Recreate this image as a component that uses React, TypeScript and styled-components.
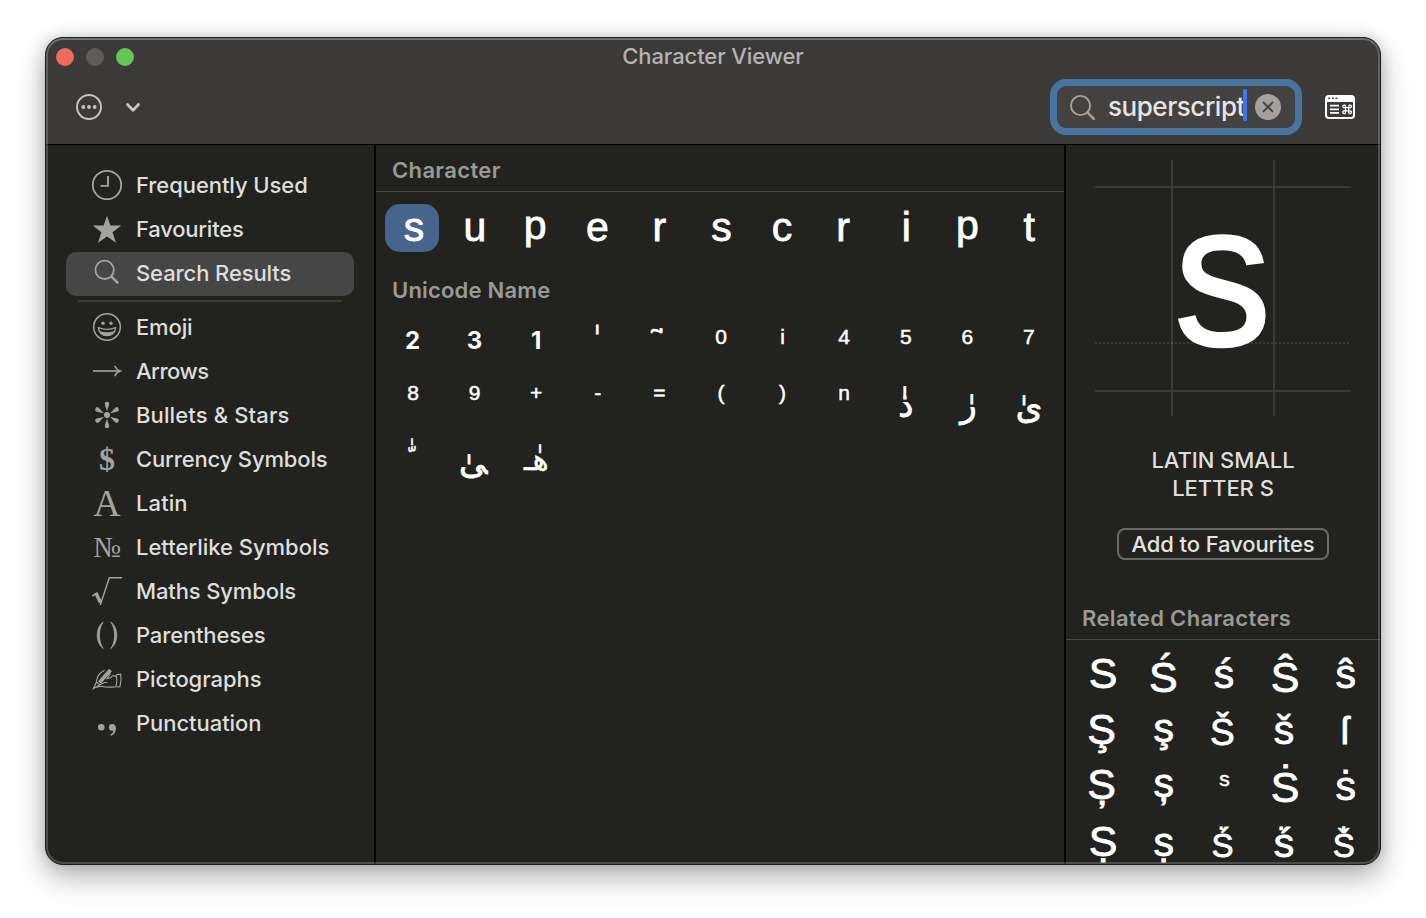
import React from "react";
import styled, { createGlobalStyle } from "styled-components";

const UI = `Inter, "Liberation Sans", sans-serif`;
const GLYPH = `"Liberation Sans", "DejaVu Sans", sans-serif`;

const GlobalStyle = createGlobalStyle`
  html, body { margin: 0; background: #fff; }
  body { font-family: ${UI}; overflow: hidden; }
  *, *::before, *::after { box-sizing: border-box; }
`;

const Desktop = styled.div`
  width: 1426px;
  height: 918px;
  padding: 37px 45px 53px;
  background: #fff;
`;

const Window = styled.div`
  width: 1336px;
  height: 828px;
  border: 1px solid #1b1c1a;
  border-radius: 18px;
  overflow: hidden;
  background: #22231e;
  box-shadow: 0 12px 30px rgba(0, 0, 0, 0.3), 0 0 14px rgba(0, 0, 0, 0.16);
  position: relative;
  display: flex;
  flex-direction: column;

  /* light rim drawn over the content along the window edge */
  &::after {
    content: "";
    position: absolute;
    inset: 0;
    border: 2px solid rgba(255, 255, 255, 0.2);
    border-top-color: rgba(255, 255, 255, 0.28);
    border-radius: 17px;
    pointer-events: none;
  }
`;

const Header = styled.header`
  height: 107px;
  flex: none;
  background: #3b3a38;
  border-bottom: 1px solid #000;
`;

const TitleBar = styled.div`
  height: 38px;
  display: grid;
  grid-template-columns: 200px 1fr 200px;
  align-items: center;
`;

const Lights = styled.div`
  display: flex;
  gap: 12px;
  padding-left: 10px;
`;

const Light = styled.span<{ $color: string }>`
  width: 18px;
  height: 18px;
  border-radius: 50%;
  background: ${(p) => p.$color};
`;

const Title = styled.h1`
  margin: 0;
  padding-bottom: 2px;
  text-align: center;
  font-size: 22px;
  font-weight: 450;
  letter-spacing: -0.1px;
  color: #b5b4b3;
`;

const Toolbar = styled.div`
  height: 62px;
  display: flex;
  align-items: center;
  padding: 0 24px 0 29px;
`;

const MenuButton = styled.button`
  display: flex;
  align-items: center;
  gap: 22px;
  padding: 0;
  border: 0;
  background: none;
  margin-right: auto;
`;

const SearchField = styled.div`
  width: 252px;
  height: 56px;
  margin-right: 22px;
  border: 7px solid #48759f;
  border-radius: 16px;
  background: #444240;
  display: flex;
  align-items: center;
  padding-left: 12px;
`;

const Query = styled.span`
  margin-left: 12px;
  width: 135px;
  font-size: 26px;
  line-height: 32px;
  font-weight: 450;
  letter-spacing: -0.45px;
  color: #e6e5e4;
  white-space: nowrap;
`;

const Caret = styled.span`
  width: 4px;
  height: 32px;
  margin: -4px 8px 0 0;
  border-radius: 1px;
  background: #3478f6;
`;

const Body = styled.div`
  flex: 1;
  min-height: 0;
  display: grid;
  grid-template-columns: 330px 690px 1fr;
`;

const Sidebar = styled.nav`
  border-right: 2px solid #000;
  padding: 19px 20px 0;
`;

const Item = styled.div<{ $active?: boolean }>`
  height: 44px;
  border-radius: 10px;
  padding: 0 0 2px 24px;
  display: flex;
  align-items: center;
  gap: 12px;
  color: #dededd;
  background: ${(p) => (p.$active ? "#464646" : "transparent")};
`;

const ItemIcon = styled.span`
  width: 34px;
  height: 34px;
  display: block;
  svg { display: block; overflow: visible; }
`;

const ItemLabel = styled.span<{ $track: number }>`
  font-size: 22px;
  line-height: 42px;
  font-weight: 450;
  letter-spacing: ${(p) => p.$track}px;
  white-space: nowrap;
`;

const Divider = styled.hr`
  height: 2px;
  margin: 4px 12px;
  border: 0;
  background: #3a3b37;
`;

const Main = styled.main`
  border-right: 2px solid #000;
`;

const Heading = styled.h2<{ $height: number; $rule?: boolean; $track?: number }>`
  margin: 0;
  height: ${(p) => p.$height}px;
  padding: 0 16px;
  display: flex;
  align-items: center;
  font-size: 22px;
  font-weight: 600;
  letter-spacing: ${(p) => p.$track ?? 0}px;
  color: #9a9a97;
  ${(p) => (p.$rule ? "padding-top: 4px; border-bottom: 1px solid #484945;" : "")}
`;

const Grid = styled.div<{ $cols: number; $pitch: number; $pad: string }>`
  display: grid;
  grid-template-columns: repeat(${(p) => p.$cols}, ${(p) => p.$pitch}px);
  grid-auto-rows: 56px;
  padding: ${(p) => p.$pad};
`;

const Cell = styled.div<{ $selected?: boolean }>`
  height: 48px;
  margin: 4px 4.6px 4px 3px;
  border-radius: 15px;
  display: flex;
  justify-content: center;
  background: ${(p) => (p.$selected ? "#48658d" : "transparent")};
`;

/* base: distance from the top of the 48px cell to the text baseline */
const Mark = styled.span<{ $size: number; $base: number; $dx: number; $weight: number; $font: string; $k: number; $turn: number }>`
  height: 48px;
  margin: 0 -20px;
  padding-left: ${(p) => Math.max(0, p.$dx * 2)}px;
  padding-right: ${(p) => Math.max(0, -p.$dx * 2)}px;
  font-family: ${(p) => p.$font};
  font-size: ${(p) => p.$size}px;
  font-weight: ${(p) => p.$weight};
  line-height: ${(p) => 2 * (p.$base - p.$k * p.$size)}px;
  -webkit-text-stroke: ${(p) => (p.$weight > 400 ? 0 : p.$size > 30 ? 0.8 : 0.5)}px #fff;
  color: #fff;
  white-space: nowrap;
  ${(p) => (p.$turn ? `transform: rotate(${p.$turn}deg);` : "")}
`;

type G = { c: string; s?: number; b?: number; dx?: number; w?: number; ui?: boolean; ar?: boolean; sel?: boolean; turn?: number };

const GlyphCell = ({ g }: { g: G }) => (
  <Cell $selected={g.sel}>
    <Mark
      $size={g.s ?? 41}
      $base={(g.b ?? 40) - 3.5}
      $dx={(g.dx ?? 0) + 1}
      $weight={g.w ?? 400}
      $font={g.ui ? UI : g.ar ? `"DejaVu Sans", sans-serif` : GLYPH}
      $k={g.ui ? 0.3637 : 0.3465}
      $turn={g.turn ?? 0}
    >
      {g.c}
    </Mark>
  </Cell>
);

const letterShift = [1, 0.3, -1, -0.5, 0, 0.5, -0.5, -1, 0.5, 0, 0.3];
const letters: G[] = "superscript".split("").map((c, i) => ({
  c,
  sel: i === 0,
  b: c === "p" ? 39 : 41,
  dx: letterShift[i],
}));

const sup = (c: string): G => ({ c, s: 21, b: 34, dx: 0 });
const unicodeNames: G[] = [
  { c: "2", s: 24, b: 39, w: 700, ui: true, dx: -0.5 },
  { c: "3", s: 24, b: 39, w: 700, ui: true },
  { c: "1", s: 24, b: 39, w: 700, ui: true },
  { c: "\u00a0\u0670", s: 32, b: 43, dx: -3.5, ar: true },
  { c: "\u00a0\u0711", s: 34, b: 50, dx: 2, turn: -90 },
  ..."0i4567".split("").map(sup),
  ..."89+-=()n".split("").map(sup),
  { c: "\u0630\u0670", s: 34, b: 51, ar: true },
  { c: "\u0631\u0670", s: 34, b: 50.5, dx: 1, ar: true },
  { c: "\u0649\u0670", s: 34, b: 51.5, ar: true },
  { c: "\u00a0\u0651\u0670", s: 23, b: 44, dx: -3, ar: true },
  { c: "\u200d\u0649\u0670", s: 34, b: 52, dx: -1.5, ar: true },
  { c: "\u0647\u0670\u0640", s: 30, b: 48, ar: true },
];

const related: G[] = [
  { c: "S", s: 43, b: 42, dx: 0.5 }, { c: "Ś", s: 43, b: 45.5 }, { c: "ś", b: 42 }, { c: "Ŝ", s: 43, b: 45.5, dx: 0.5 }, { c: "ŝ", b: 42, dx: 0.5 },
  { c: "Ş", s: 43, b: 41.5, dx: -1 }, { c: "ş", b: 40.5, dx: 0.5 }, { c: "Š", s: 37, b: 43.5, dx: -1.5 }, { c: "š", b: 42, dx: -0.5 }, { c: "ſ", s: 39, b: 42, dx: -0.5 },
  { c: "Ș", s: 43, b: 41, dx: -1 }, { c: "ș", b: 39, dx: 0.5 }, { c: "s", s: 21, b: 27.5, dx: 0.5 }, { c: "Ṡ", s: 43, b: 44, dx: 0.5 }, { c: "ṡ", b: 42.5, dx: 0.5 },
  { c: "Ṣ", s: 43, b: 42, dx: 0.5 }, { c: "ṣ", b: 42.5, dx: 0.5 }, { c: "Ṥ", s: 33, b: 43, dx: -1.5 }, { c: "ṥ", b: 43.5, dx: -0.5 }, { c: "Ṧ", s: 33, b: 43, dx: -1.5 },
];

const Details = styled.aside`
  display: flex;
  flex-direction: column;
  overflow: hidden;
`;

const Preview = styled.svg`
  display: block;
  flex: none;
  margin: 15px 0 0 29px;
  overflow: visible;
`;

const GlyphName = styled.p`
  margin: 30px 0 0;
  text-align: center;
  font-size: 22px;
  line-height: 28px;
  letter-spacing: -0.05px;
  font-weight: 450;
  color: #dededd;
`;

const FavouriteButton = styled.button`
  align-self: center;
  flex: none;
  width: 212px;
  height: 32px;
  margin: 26px 0 0;
  padding: 0;
  border: 2px solid #6a6b68;
  border-radius: 8px;
  background: transparent;
  font: 450 22px/28px ${UI};
  letter-spacing: -0.1px;
  color: #e4e4e3;
  white-space: nowrap;
`;

const RelatedHeading = styled(Heading)`
  flex: none;
  margin-top: 34px;
  && { padding-top: 2px; }
`;

const tone = "#a3a3a0";
const serif = `"Liberation Serif", serif`;
const icon = (children: React.ReactNode) => (
  <svg width="34" height="34" viewBox="0 0 34 34" fill="none" stroke={tone} strokeWidth="1.6">
    {children}
  </svg>
);
const textIcon = (c: string, size: number, y: number, weight = 400) =>
  icon(
    <text x="17" y={y} textAnchor="middle" fontFamily={serif} fontSize={size} fontWeight={weight} fill={tone} stroke="none">
      {c}
    </text>
  );

const petal = "M17 13.6 C16.1 9.5 14.7 7.5 14.8 5.6 A2.2 1.8 0 0 1 19.2 5.6 C19.3 7.5 17.9 9.5 17 13.6Z";

const icons: Record<string, React.ReactNode> = {
  clock: icon(<><circle cx="17" cy="17" r="14.2" strokeWidth="1.8" /><path d="M18 8v9.9h-7.5" strokeWidth="1.9" /></>),
  star: icon(<path d="M17 3.8l3.4 9.8h10.9l-8.7 6.6 3.4 10.6-9-6.4-9 6.4 3.4-10.6-8.7-6.6h10.9z" fill={tone} stroke="none" />),
  search: icon(<><circle cx="14.6" cy="13.8" r="9.2" strokeWidth="1.8" /><path d="M21.2 20.4l7 7" strokeWidth="2.6" /></>),
  emoji: icon(
    <>
      <circle cx="17" cy="17" r="13.3" strokeWidth="1.5" />
      <circle cx="13" cy="13.2" r="1.7" fill={tone} stroke="none" />
      <circle cx="21" cy="13.2" r="1.7" fill={tone} stroke="none" />
      <path d="M8.4 17.6c5 2 12.2 2 17.2 0c0 4.8-3.8 8-8.6 8s-8.6-3.2-8.6-8z" strokeWidth="1.3" />
      <path d="M9.6 21.2c4.8 1.4 10 1.4 14.8 0c-1.5 3-4.2 4.4-7.4 4.4s-5.9-1.4-7.4-4.4z" fill={tone} stroke="none" />
    </>
  ),
  arrow: icon(<><path d="M3 17h27" /><path d="M24.6 11.8c1.2 2.6 3 4.4 5.6 5.2c-2.6.8-4.4 2.6-5.6 5.2" strokeWidth="1.5" /></>),
  bullets: icon(
    <g fill={tone} stroke="none">
      <circle cx="17" cy="17" r="3" />
      {[0, 60, 120, 180, 240, 300].map((a) => <path key={a} d={petal} transform={`rotate(${a} 17 17)`} />)}
    </g>
  ),
  currency: textIcon("$", 32, 27.5, 700),
  latin: textIcon("A", 38, 29.5),
  letterlike: textIcon("№", 29, 26.5),
  root: icon(<><path d="M2.5 22l4.5-3.2" /><path d="M6 19l4.4 9.5" strokeWidth="3.4" /><path d="M10.3 31L19.3 3.8H32" strokeWidth="1.4" /></>),
  parens: icon(
    <g fill={tone} stroke={tone} strokeWidth=".8">
      <path d="M13.2 4c-8 6-8 20.5 0 26.5c-5-7-5-19.500 0-26.5z" />
      <path d="M20.800 4c8 6 8 20.5 0 26.5c5-7 5-19.500 0-26.5z" />
    </g>
  ),
  writing: icon(
    <g strokeWidth="1.1">
      <path d="M9.5 20.5L20.5 8" strokeWidth="3.8" />
      <path d="M3.4 26.6l3.1-6.6l3.3 3zM6.500 19.5c.5-5 2.5-8.500 8-11.200M10 22.800l4.500-2.300h2.800M20.500 11.500l-3.500 5.200c2.500-.2 4.500-1.200 6-3.200l3 1M5.500 25.500l5.500-1.200c4 1 9 1 14.500.7M26 12.800l4.700-.6c.8 4.200.4 8.500-.8 12.800l-4.200-.3" />
      <path d="M26 12.800c1.200 4 1 8-.3 11.900" />
    </g>
  ),
  punctuation: icon(
    <g fill={tone} stroke="none">
      <circle cx="11.3" cy="21.2" r="3.3" />
      <path d="M22.3 17.9c2.3 0 3.7 1.7 3.7 4.3c0 3.8-2 6.3-5.1 7.7l-.6-1.3c1.7-.8 2.9-2 3.1-4.1c-.4.2-.8.2-1.2.2a3.4 3.4 0 0 1 .1-6.8z" />
    </g>
  ),
};

const topItems: [string, string, number][] = [
  ["clock", "Frequently Used", -0.07],
  ["star", "Favourites", -0.22],
  ["search", "Search Results", -0.1],
];
const categories: [string, string, number][] = [
  ["emoji", "Emoji", -0.15],
  ["arrow", "Arrows", -0.5],
  ["bullets", "Bullets & Stars", 0.13],
  ["currency", "Currency Symbols", -0.15],
  ["latin", "Latin", 0.1],
  ["letterlike", "Letterlike Symbols", -0.02],
  ["root", "Maths Symbols", -0.13],
  ["parens", "Parentheses", -0.15],
  ["writing", "Pictographs", -0.06],
  ["punctuation", "Punctuation", -0.05],
];

const Entry = ({ item, active }: { item: [string, string, number]; active?: boolean }) => (
  <Item $active={active}>
    <ItemIcon>{icons[item[0]]}</ItemIcon>
    <ItemLabel $track={item[2]}>{item[1]}</ItemLabel>
  </Item>
);

export default function App() {
  return (
    <Desktop>
      <GlobalStyle />
      <Window>
        <Header>
          <TitleBar>
            <Lights>
              <Light $color="#ee6a5f" />
              <Light $color="#5d5c5a" />
              <Light $color="#62c554" />
            </Lights>
            <Title>Character Viewer</Title>
          </TitleBar>
          <Toolbar>
            <MenuButton aria-label="More options">
              <svg width="28" height="28" viewBox="0 0 28 28" fill="none" stroke="#c6c5c4" strokeWidth="1.9">
                <circle cx="14" cy="14" r="12" />
                <g fill="#c6c5c4" stroke="none">
                  <circle cx="8.3" cy="14" r="1.9" />
                  <circle cx="14" cy="14" r="1.9" />
                  <circle cx="19.7" cy="14" r="1.9" />
                </g>
              </svg>
              <svg width="16" height="12" viewBox="0 0 16 12" fill="none" stroke="#c6c5c4" strokeWidth="2.8" strokeLinecap="round" strokeLinejoin="round">
                <path d="M2.5 3.5L8 9.3l5.5-5.8" />
              </svg>
            </MenuButton>
            <SearchField>
              <svg width="27" height="27" viewBox="0 0 27 27" fill="none" stroke="#a3a2a1" strokeLinecap="round">
                <circle cx="11.5" cy="11.5" r="9.6" strokeWidth="1.9" />
                <path d="M18.6 18.6l6.2 6.2" strokeWidth="2.6" />
              </svg>
              <Query>superscript</Query>
              <Caret />
              <svg width="26" height="26" viewBox="0 0 26 26">
                <circle cx="13" cy="13" r="13" fill="#a3a2a1" />
                <path d="M8.6 8.6l8.8 8.8M17.4 8.6l-8.8 8.8" stroke="#444240" strokeWidth="2" strokeLinecap="round" />
              </svg>
            </SearchField>
            <svg width="32" height="24" viewBox="0 0 32 24" fill="none">
              <rect x="2" y="1" width="28" height="22" rx="3" stroke="#fff" strokeWidth="2" />
              <path d="M2 1.5h28v5.5H2z" fill="#fff" />
              <path d="M4.3 3.3h1.8M8 3.3h1.8M11.5 3.3h1.8" stroke="#3b3a38" strokeWidth="1.6" />
              <path d="M6 10.7h9M6 14.3h9M6 17.9h9" stroke="#fff" strokeWidth="1.7" />
              <path
                d="M21 12.7h4.2M21 15.9h4.2M21.5 12.2v4.2M24.7 12.2v4.2M21.5 12.7h-1.1a1.35 1.35 0 1 1 1.1-1.3zM24.7 12.7h1.1a1.35 1.35 0 1 0-1.1-1.3zM21.5 15.9h-1.1a1.35 1.35 0 1 0 1.1 1.3zM24.7 15.9h1.1a1.35 1.35 0 1 1-1.1 1.3z"
                stroke="#fff"
                strokeWidth="1.3"
              />
            </svg>
          </Toolbar>
        </Header>
        <Body>
          <Sidebar>
            {topItems.map((it, i) => <Entry key={it[0]} item={it} active={i === 2} />)}
            <Divider />
            {categories.map((it) => <Entry key={it[0]} item={it} />)}
          </Sidebar>
          <Main>
            <Heading $height={47} $rule $track={0.35}>Character</Heading>
            <Grid $cols={11} $pitch={61.6} $pad="8px 0 14px 6px">
              {letters.map((g, i) => <GlyphCell key={i} g={g} />)}
            </Grid>
            <Heading $height={40} $track={0.2}>Unicode Name</Heading>
            <Grid $cols={11} $pitch={61.6} $pad="0 0 0 6px">
              {unicodeNames.map((g, i) => <GlyphCell key={i} g={g} />)}
            </Grid>
          </Main>
          <Details>
            <Preview width="256" height="256" viewBox="0 0 256 256">
              <g stroke="rgba(255,255,255,0.11)" strokeWidth="2">
                <path d="M77 0v256M179 0v256M0 27h256M0 231h256" />
                <path d="M0 183h256" strokeDasharray="2 2" />
              </g>
              <text
                x="0"
                y="184.5"
                transform="translate(127.800 0) scale(0.955 1)"
                textAnchor="middle"
                fontFamily={GLYPH}
                fontSize="204"
                fill="#fff"
                stroke="#fff"
                strokeWidth="2.5"
              >
                s
              </text>
            </Preview>
            <GlyphName>LATIN SMALL<br />LETTER S</GlyphName>
            <FavouriteButton>Add to Favourites</FavouriteButton>
            <RelatedHeading $height={46} $rule $track={0.35}>Related Characters</RelatedHeading>
            <Grid $cols={5} $pitch={60.7} $pad="6px 0 0 6px">
              {related.map((g, i) => <GlyphCell key={i} g={g} />)}
            </Grid>
          </Details>
        </Body>
      </Window>
    </Desktop>
  );
}
